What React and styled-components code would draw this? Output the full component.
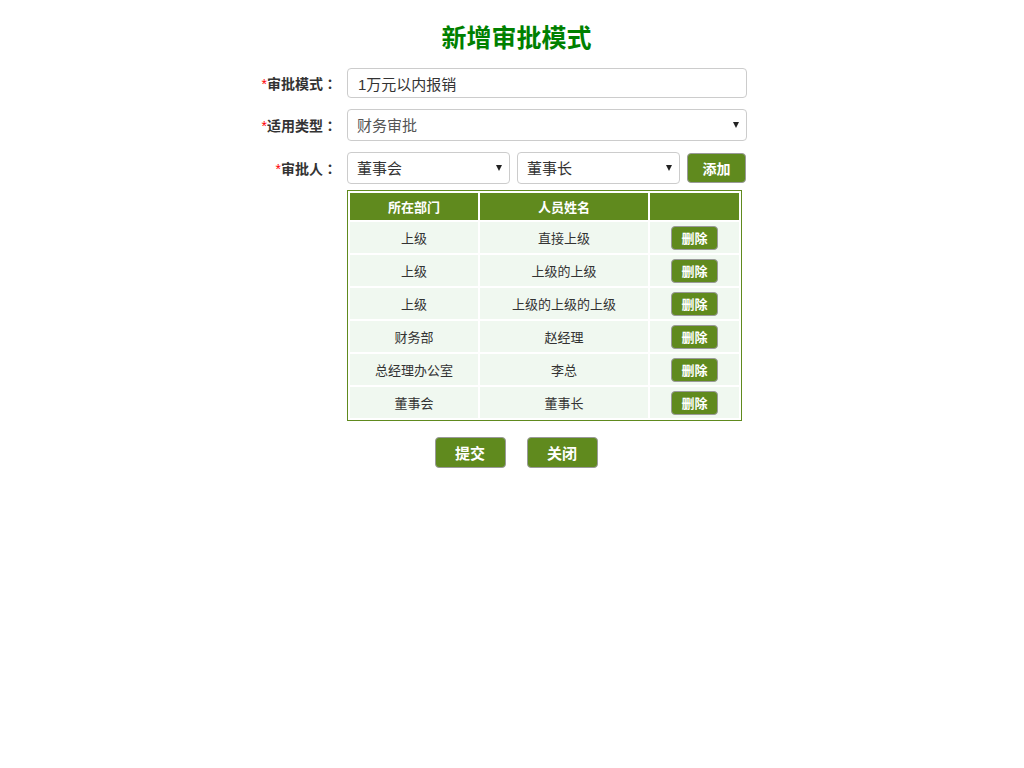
import styled, { createGlobalStyle } from 'styled-components'

const GlobalStyle = createGlobalStyle`
  body {
    margin: 0;
    background: #fff;
    font-family: "Liberation Sans", "Noto Sans CJK SC", sans-serif;
    color: #333;
  }
`

const Page = styled.div`
  padding: 20px 0 40px 8px;
`

const Title = styled.h1`
  margin: 0 0 12px;
  padding-left: 1px;
  font-size: 25px;
  line-height: 36px;
  font-weight: bold;
  color: #008000;
  text-align: center;
`

const Form = styled.div`
  width: 518px;
  margin: 0 auto;
`

const Row = styled.div`
  display: grid;
  grid-template-columns: 90px 400px;
  align-items: center;
  margin-bottom: ${p => p.$gap}px;
`

const Label = styled.label`
  padding-right: 10px;
  text-align: right;
  font-size: 14px;
  font-weight: bold;
  color: #333;
  white-space: nowrap;
`

const Star = styled.span`
  color: #f00;
  font-weight: normal;
`

const Colon = styled.span`
  display: inline-block;
  width: 14px;
  text-align: center;
  font-family: "Noto Sans CJK TC", sans-serif;
`

const TextInput = styled.input`
  box-sizing: border-box;
  width: 400px;
  height: 30px;
  padding: 0 10px;
  border: 1px solid #ccc;
  border-radius: 4px;
  font-family: inherit;
  font-size: 15px;
  color: #333;
  outline: none;
`

const SelectBox = styled.div`
  position: relative;
  width: ${p => p.$width}px;
  &::after {
    content: '';
    position: absolute;
    right: 8px;
    top: 50%;
    margin-top: -3px;
    border-left: 3.5px solid transparent;
    border-right: 3.5px solid transparent;
    border-top: 6px solid #222;
    pointer-events: none;
  }
`

const Select = styled.select`
  box-sizing: border-box;
  width: 100%;
  height: 32px;
  padding: 0 20px 0 9px;
  border: 1px solid #ccc;
  border-radius: 4px;
  background: #fff;
  appearance: none;
  font-family: inherit;
  font-size: 15px;
  color: ${p => p.$muted ? '#555' : '#333'};
  outline: none;
`

const Pickers = styled.div`
  display: flex;
  align-items: center;
  gap: 7px;
`

const GreenButton = styled.button`
  box-sizing: border-box;
  width: ${p => p.$w}px;
  height: ${p => p.$h}px;
  padding: 0;
  border: 1px solid #9a9a9a;
  border-radius: 4px;
  background: #608a1e;
  color: #fff;
  font-family: inherit;
  font-size: ${p => p.$size}px;
  font-weight: bold;
  cursor: pointer;
`

const TableWrap = styled.div`
  padding-left: 90px;
`

const Table = styled.table`
  width: 395px;
  border: 1px solid #608a1e;
  border-spacing: 2px;
  font-size: 13px;
`

const Th = styled.th`
  width: ${p => p.$width}px;
  height: 27px;
  padding: 0;
  background: #608a1e;
  color: #fff;
  font-weight: bold;
  text-align: center;
`

const Td = styled.td`
  height: 31px;
  padding: 0;
  background: #f0f8f0;
  color: #333;
  text-align: center;
`

const Actions = styled.div`
  display: flex;
  justify-content: center;
  gap: 21px;
  margin-top: 16px;
`

const approvers = [
  ['上级', '直接上级'],
  ['上级', '上级的上级'],
  ['上级', '上级的上级的上级'],
  ['财务部', '赵经理'],
  ['总经理办公室', '李总'],
  ['董事会', '董事长'],
]

export default function App() {
  return (
    <Page>
      <GlobalStyle />
      <Title>新增审批模式</Title>
      <Form>
        <Row $gap={11}>
          <Label><Star>*</Star>审批模式<Colon>：</Colon></Label>
          <TextInput defaultValue='1万元以内报销' />
        </Row>
        <Row $gap={11}>
          <Label><Star>*</Star>适用类型<Colon>：</Colon></Label>
          <SelectBox $width={400}>
            <Select $muted defaultValue='财务审批'>
              <option>财务审批</option>
              <option>人事审批</option>
            </Select>
          </SelectBox>
        </Row>
        <Row $gap={6}>
          <Label><Star>*</Star>审批人<Colon>：</Colon></Label>
          <Pickers>
            <SelectBox $width={163}>
              <Select defaultValue='董事会'>
                <option>董事会</option>
                <option>财务部</option>
              </Select>
            </SelectBox>
            <SelectBox $width={163}>
              <Select defaultValue='董事长'>
                <option>董事长</option>
                <option>赵经理</option>
              </Select>
            </SelectBox>
            <GreenButton $w={59} $h={30} $size={14}>添加</GreenButton>
          </Pickers>
        </Row>
        <TableWrap>
          <Table>
            <thead>
              <tr>
                <Th $width={128}>所在部门</Th>
                <Th $width={168}>人员姓名</Th>
                <Th $width={89}></Th>
              </tr>
            </thead>
            <tbody>
              {approvers.map(([dept, name], i) => (
                <tr key={i}>
                  <Td>{dept}</Td>
                  <Td>{name}</Td>
                  <Td>
                    <GreenButton $w={47} $h={24} $size={13}>删除</GreenButton>
                  </Td>
                </tr>
              ))}
            </tbody>
          </Table>
        </TableWrap>
        <Actions>
          <GreenButton $w={71} $h={31} $size={15}>提交</GreenButton>
          <GreenButton $w={71} $h={31} $size={15}>关闭</GreenButton>
        </Actions>
      </Form>
    </Page>
  )
}
